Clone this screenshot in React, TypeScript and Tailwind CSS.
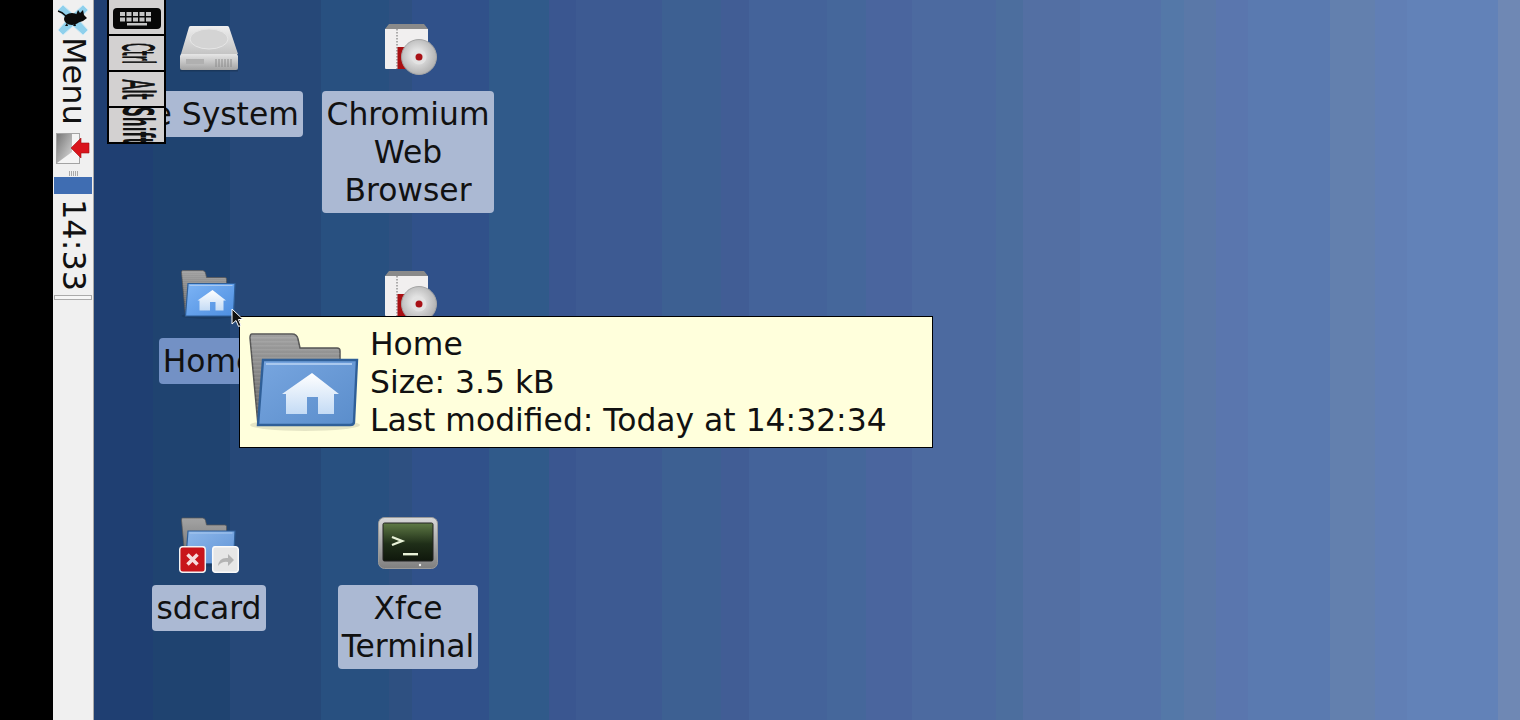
import type { ReactNode } from 'react';

const FONT = "font-['DejaVu_Sans',sans-serif]";

function DriveIcon() {
  return (
    <svg width="62" height="50" viewBox="0 0 62 50">
      <defs>
        <linearGradient id="driveTop" x1="0" y1="0" x2="0" y2="1">
          <stop offset="0" stopColor="#eeeeee" />
          <stop offset="1" stopColor="#c4c4c4" />
        </linearGradient>
        <linearGradient id="driveFront" x1="0" y1="0" x2="0" y2="1">
          <stop offset="0" stopColor="#e6e6e6" />
          <stop offset="1" stopColor="#a3a3a3" />
        </linearGradient>
      </defs>
      <path d="M13 3h36a2 2 0 0 1 2 1l9 27H3L11 4a2 2 0 0 1 2-1z" fill="url(#driveTop)" />
      <ellipse cx="31" cy="16" rx="19" ry="10" fill="#d4d4d4" stroke="#e6e6e6" />
      <path d="M3 31h56l1 2v12a2 2 0 0 1-2 2H4a2 2 0 0 1-2-2V33z" fill="url(#driveFront)" />
      <rect x="8" y="36" width="18" height="5" fill="#b0b0b0" />
      <path d="M38 36v8M41 36v8M44 36v8M47 36v8M50 36v8M53 36v8" stroke="#8c8c8c" strokeWidth="1" />
      <rect x="2" y="47" width="58" height="1.5" fill="#123" opacity=".35" />
    </svg>
  );
}

function PackageIcon() {
  return (
    <svg className="ml-[6px]" width="54" height="54" viewBox="0 0 54 54">
      <defs>
        <radialGradient id="discFace" cx=".45" cy=".45" r=".6">
          <stop offset="0" stopColor="#f6f6f6" />
          <stop offset="1" stopColor="#adadad" />
        </radialGradient>
      </defs>
      <path d="M5 1h35l4 5v6H1V6z" fill="#8a8a8a" />
      <path d="M1 6h43v39a1 1 0 0 1-1 1H2a1 1 0 0 1-1-1z" fill="#f1efef" />
      <path d="M13 6v40" stroke="#666" strokeWidth="1" strokeDasharray="1.5 1.5" />
      <rect x="13.5" y="24" width="18" height="22" fill="#a90f12" />
      <circle cx="35" cy="34" r="17.5" fill="url(#discFace)" stroke="#a5a5a5" />
      <circle cx="35" cy="34" r="7.5" fill="#e2e2e2" />
      <circle cx="35" cy="34" r="3.5" fill="#a81116" />
    </svg>
  );
}

function Folder({ id, front, size, house = true }: { id: string; front: [string, string]; size: string; house?: boolean }) {
  return (
    <svg className={size} viewBox="0 0 112 98">
      <defs>
        <linearGradient id={`${id}Back`} x1="0" y1="0" x2="0" y2="1">
          <stop offset="0" stopColor="#a0a0a0" />
          <stop offset="1" stopColor="#646464" />
        </linearGradient>
        <linearGradient id={`${id}Front`} x1="0" y1="0" x2="1" y2="1">
          <stop offset="0" stopColor={front[0]} />
          <stop offset="1" stopColor={front[1]} />
        </linearGradient>
        <linearGradient id={`${id}House`} x1="0" y1="0" x2="0" y2="1">
          <stop offset="0" stopColor="#ffffff" />
          <stop offset="1" stopColor="#c4dbf5" />
        </linearGradient>
        <pattern id={`${id}Lines`} width="4" height="4" patternUnits="userSpaceOnUse">
          <rect width="4" height="1.5" fill="#fff" opacity=".09" />
        </pattern>
      </defs>
      <ellipse cx="56" cy="92" rx="55" ry="6" fill="#000" opacity=".1" />
      <path d="M3 1h40q5 0 6 5l2 9h37q3 0 3 3v12L12 92H9L1 5q0-4 2-4z" fill={`url(#${id}Back)`} stroke="#555" strokeWidth="1.5" />
      <path d="M3 1h40q5 0 6 5l2 9h37q3 0 3 3v12L12 92H9L1 5q0-4 2-4z" fill={`url(#${id}Lines)`} />
      <path d="M14 27h94l-3 62q0 3-4 3H9z" fill={`url(#${id}Front)`} stroke="#2f5f98" strokeWidth="2.4" />
      <path d="M17 31h86" stroke="#a9c8ee" strokeWidth="2" />
      {house && <path d="M63 40 90 61h-5v20H69V64H58v17H37V61h-4z" fill={`url(#${id}House)`} />}
    </svg>
  );
}

function SdcardIcon() {
  return (
    <div className="relative h-[56px] w-[60px]">
      <div className="ml-[2px]">
        <Folder id="sd" front={['#8db7ea', '#5f93d6']} size="h-[50px] w-[56px]" house={false} />
      </div>
      <svg className="absolute bottom-0 left-0" width="60" height="27" viewBox="0 0 60 27">
        <rect x=".7" y=".7" width="25.6" height="25.6" rx="3" fill="#c8151b" stroke="#f2f2f2" strokeWidth="1.5" />
        <path d="M8.5 8.5l10 10M18.5 8.5l-10 10" stroke="#f6dcdc" strokeWidth="3.5" />
        <rect x="33.7" y=".7" width="25.6" height="25.6" rx="3" fill="#e6e6e6" stroke="#fafafa" strokeWidth="1.5" />
        <path d="M39 20q1-9 10-8V8l6 6-6 6v-4q-6-1-10 4z" fill="#b3b3b3" />
      </svg>
    </div>
  );
}

function TerminalIcon() {
  return (
    <svg width="60" height="52" viewBox="0 0 60 52">
      <defs>
        <linearGradient id="termFrame" x1="0" y1="0" x2="0" y2="1">
          <stop offset="0" stopColor="#d8d8d8" />
          <stop offset="1" stopColor="#7f7f7f" />
        </linearGradient>
        <linearGradient id="termScreen" x1="0" y1="0" x2="0" y2="1">
          <stop offset="0" stopColor="#5f7a45" />
          <stop offset=".55" stopColor="#1f2e18" />
          <stop offset="1" stopColor="#0f170c" />
        </linearGradient>
      </defs>
      <rect x=".5" y=".5" width="59" height="51" rx="6" fill="url(#termFrame)" stroke="#9a9a9a" />
      <rect x="5" y="6" width="50" height="38" rx="1.5" fill="url(#termScreen)" stroke="#222" />
      <path d="M14 20l10 4-10 4" stroke="#e8f2d8" strokeWidth="2.4" fill="none" />
      <rect x="25" y="36" width="15" height="2.4" fill="#e8f2d8" />
      <circle cx="42" cy="48" r="1.2" fill="#eee" />
    </svg>
  );
}

function DesktopIcon({ place, label, labelClass, children }: { place: string; label?: ReactNode; labelClass?: string; children: ReactNode }) {
  return (
    <div className={`absolute flex w-[200px] flex-col items-center ${place}`}>
      <div className="flex h-[72px] w-full items-start justify-center pt-[4px]">{children}</div>
      {label && <div className={`shrink-0 rounded-[4px] px-[4px] py-[4px] text-center whitespace-nowrap ${labelClass ?? 'bg-[#abb9d3]'}`}>{label}</div>}
    </div>
  );
}

function MouseLogo() {
  return (
    <svg width="32" height="33" viewBox="0 0 32 33">
      <path d="M6 2 16 11 26 2l5 5-9 10 9 10-5 5-10-9L6 32l-5-5 9-10L1 7z" fill="#8fd0ec" stroke="#cfeaf6" strokeWidth="1" />
      <path d="M1 8q4 1 8 5" stroke="#0b0b0b" strokeWidth="1.4" fill="none" />
      <ellipse cx="15" cy="16" rx="8" ry="6" fill="#0b0b0b" />
      <path d="M19 12l2-5 2 3 3-3 1 5 3 3-4 3-6 2z" fill="#0b0b0b" />
      <path d="M10 20l-2 3h3zM18 20l1 3h-3z" fill="#0b0b0b" />
    </svg>
  );
}

function LogoutIcon() {
  return (
    <svg width="34" height="31" viewBox="0 0 34 31">
      <defs>
        <linearGradient id="doorPanel" x1="0" y1="0" x2="1" y2="1">
          <stop offset="0" stopColor="#777777" />
          <stop offset="1" stopColor="#dddddd" />
        </linearGradient>
      </defs>
      <rect x=".5" y=".5" width="23" height="30" fill="#f4f4f4" stroke="#a3a3a3" />
      <path d="M1 1h15v18L1 30z" fill="url(#doorPanel)" />
      <path d="M15 15 25 5v5h8v10h-8v5z" fill="#d9141c" stroke="#a30d12" strokeWidth=".6" />
    </svg>
  );
}

function KeyCell({ children }: { children: ReactNode }) {
  return <div className="-mt-[2px] flex h-[38px] items-center justify-center overflow-hidden border-2 border-black bg-[#d3d1d1]">{children}</div>;
}

function KeyboardWidget() {
  return (
    <div className="absolute top-0 left-[13px] z-10 flex w-[59px] flex-col text-[#111]">
      <KeyCell>
        <svg className="mt-[2px]" width="48" height="21" viewBox="0 0 48 21">
          <rect width="48" height="21" rx="4" fill="#070707" />
          <path d="M7 4h5v4H7zM13.500 4h5v4h-5zM20 4h5v4h-5zM26.500 4h5v4h-5zM33 4h5v4h-5zM7 9.500h5v4H7zM13.500 9.500h5v4h-5zM20 9.500h5v4h-5zM26.500 9.500h5v4h-5zM33 9.500h5v4h-5zM14 15h20v2.500H14z" fill="#c4c4c4" />
        </svg>
      </KeyCell>
      <KeyCell><span className="origin-center scale-y-[.28] text-[42px] leading-none [-webkit-text-stroke:1.5px_#111] [writing-mode:vertical-rl]">Ctrl</span></KeyCell>
      <KeyCell><span className="origin-center scale-y-[.35] text-[42px] leading-none [-webkit-text-stroke:1.5px_#111] [writing-mode:vertical-rl]">Alt</span></KeyCell>
      <KeyCell><span className="origin-center scale-y-[.33] text-[42px] leading-none font-bold [writing-mode:vertical-rl]">Shift</span></KeyCell>
    </div>
  );
}

function Tooltip() {
  return (
    <div className="absolute top-[316px] left-[145px] z-20 flex w-[694px] items-center gap-[9px] border border-black bg-[#ffffdc] py-[8px] pl-[9px] text-[#111]">
      <Folder id="tip" front={['#78a6e0', '#5a8dcb']} size="h-[98px] w-[112px] shrink-0" />
      <div className="whitespace-nowrap">
        <div>Home</div>
        <div>Size: 3.5 kB</div>
        <div>Last modified: Today at 14:32:34</div>
      </div>
    </div>
  );
}

function Cursor() {
  return (
    <svg className="absolute top-[308px] left-[137px] z-30" width="13" height="20" viewBox="0 0 13 20">
      <path d="M1 1v15l4-3.5 2.6 6 2.4-1-2.6-6H12z" fill="#111" stroke="#fff" strokeWidth="1" />
    </svg>
  );
}

function Panel() {
  return (
    <aside className="flex h-full w-[41px] shrink-0 flex-col items-center border-r border-[#a9a9a9] bg-[#f0f0f0] text-[32px] text-[#111]">
      <div className="mt-[3px] h-[33px]"><MouseLogo /></div>
      <div className="mt-[1px] h-[96px] pl-[2px] leading-[38px] [writing-mode:vertical-rl]">Menu</div>
      <div className="h-[31px]"><LogoutIcon /></div>
      <div className="mt-[7px] flex h-[5px] gap-[1px]">
        <i className="w-px bg-[#aaa]" /><i className="w-px bg-[#aaa]" /><i className="w-px bg-[#aaa]" /><i className="w-px bg-[#aaa]" /><i className="w-px bg-[#aaa]" />
      </div>
      <div className="mt-[1px] h-[17px] w-[38px] bg-[#3f6db2]" />
      <div className="mt-[5px] h-[96px] pl-[2px] leading-[38px] [writing-mode:vertical-rl]">14:33</div>
      <div className="h-[5px] w-[38px] border border-[#aaa] bg-[#f6f6f6]" />
    </aside>
  );
}

export default function App() {
  return (
    <div className={`flex h-[720px] w-[1520px] overflow-hidden bg-black pl-[53px] text-[31.4px] leading-[38px] ${FONT}`}>
      <Panel />
      <main className="relative h-full flex-1 overflow-hidden bg-[linear-gradient(90deg,#1f3f72_0_59px,#1f4370_59px_136px,#264878_136px_227px,#285080_227px_295px,#2e5081_295px_318px,#30518a_318px_395px,#305a8a_395px_455px,#3a5690_455px_482px,#3d5a92_482px_568px,#3d6092_568px_627px,#415d95_627px_655px,#44639a_655px_733px,#45679b_733px_772px,#4a659e_772px_818px,#4c6aa0_818px_902px,#4c6e9e_902px_929px,#536fa3_929px_986px,#5472a8_986px_1067px,#5478a8_1067px_1090px,#5a78a8_1090px_1122px,#5a76ae_1122px_1154px,#5a7ab0_1154px_1236px,#6380ae_1236px_1281px,#617fb5_1281px_1313px,#6282b8_1313px_1404px,#6f88b4_1404px_1426px)] text-[#111]">
        <DesktopIcon place="top-[19px] left-[15px]" label="File System"><DriveIcon /></DesktopIcon>
        <DesktopIcon place="top-[19px] left-[214px]" label={<>Chromium<br />Web<br />Browser</>}><PackageIcon /></DesktopIcon>
        <DesktopIcon place="top-[266px] left-[15px]" label="Home" labelClass="bg-[#7391c5]">
          <Folder id="home" front={['#7db4f5', '#4d8ee0']} size="h-[49px] w-[56px]" />
        </DesktopIcon>
        <DesktopIcon place="top-[266px] left-[214px]"><PackageIcon /></DesktopIcon>
        <DesktopIcon place="top-[513px] left-[15px]" label="sdcard"><SdcardIcon /></DesktopIcon>
        <DesktopIcon place="top-[513px] left-[214px]" label={<>Xfce<br />Terminal</>}><TerminalIcon /></DesktopIcon>
        <KeyboardWidget />
        <Tooltip />
        <Cursor />
      </main>
    </div>
  );
}
